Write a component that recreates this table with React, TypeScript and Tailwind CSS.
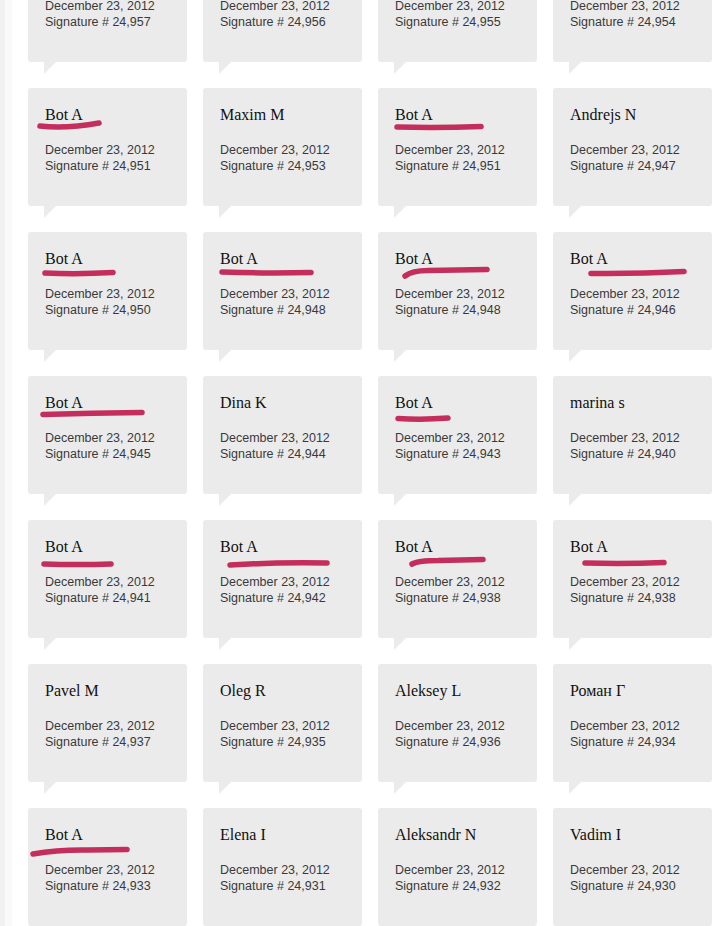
import React from 'react';

type Mark = { d: string };

type Entry = {
  name: string;
  sig: string;
  mark?: Mark;
};

// each row of the wall, four cards wide
const rows: Entry[][] = [
  [
    { name: 'Bot A', sig: '24,957' },
    { name: 'Bot A', sig: '24,956' },
    { name: 'Bot A', sig: '24,955' },
    { name: 'Bot A', sig: '24,954' },
  ],
  [
    { name: 'Bot A', sig: '24,951', mark: { d: 'M12 38 Q38 41 71 35' } },
    { name: 'Maxim M', sig: '24,953' },
    { name: 'Bot A', sig: '24,951', mark: { d: 'M19 39 Q60 40 103 38.5' } },
    { name: 'Andrejs N', sig: '24,947' },
  ],
  [
    { name: 'Bot A', sig: '24,950', mark: { d: 'M17 41 Q50 42.5 85 40.5' } },
    { name: 'Bot A', sig: '24,948', mark: { d: 'M19 40 Q62 41.5 108 40.5' } },
    { name: 'Bot A', sig: '24,948', mark: { d: 'M27 44 Q34 38.5 50 38.5 L109 37.5' } },
    { name: 'Bot A', sig: '24,946', mark: { d: 'M38 41.5 Q85 42 131 39.5' } },
  ],
  [
    { name: 'Bot A', sig: '24,945', mark: { d: 'M15 38.5 Q65 37 114 36.5' } },
    { name: 'Dina K', sig: '24,944' },
    { name: 'Bot A', sig: '24,943', mark: { d: 'M20 42.5 Q45 44 70 42' } },
    { name: 'marina s', sig: '24,940' },
  ],
  [
    { name: 'Bot A', sig: '24,941', mark: { d: 'M16 44 Q50 45 83 44' } },
    { name: 'Bot A', sig: '24,942', mark: { d: 'M27 45 Q75 42 124 43' } },
    { name: 'Bot A', sig: '24,938', mark: { d: 'M34 44 Q40 40.5 60 40.5 L105 39.5' } },
    { name: 'Bot A', sig: '24,938', mark: { d: 'M32 43 Q72 44 111 42.5' } },
  ],
  [
    { name: 'Pavel M', sig: '24,937' },
    { name: 'Oleg R', sig: '24,935' },
    { name: 'Aleksey L', sig: '24,936' },
    { name: 'Роман Г', sig: '24,934' },
  ],
  [
    { name: 'Bot A', sig: '24,933', mark: { d: 'M5 46 Q30 41.5 60 42 L99 41.5' } },
    { name: 'Elena I', sig: '24,931' },
    { name: 'Aleksandr N', sig: '24,932' },
    { name: 'Vadim I', sig: '24,930' },
  ],
];

const SignatureCard = ({ entry }: { entry: Entry }) => {
  return (
    <div className="flex flex-col">
      <div className="relative rounded-[3px] bg-[#ebebeb] pl-[17px] pr-3 pt-[17px] pb-[32px]">
        <div className="text-[16px] leading-[20px] text-[#111] font-['Liberation_Serif','DejaVu_Serif',serif]">
          {entry.name}
        </div>
        <div className="mt-[17px] text-[12.5px] leading-[16px] text-[#3a3a3a] font-['Liberation_Sans',Arial,sans-serif]">
          <div>December 23, 2012</div>
          <div>Signature # {entry.sig}</div>
        </div>
        {entry.mark && (
          <svg
            className="pointer-events-none absolute left-0 top-0"
            width="159"
            height="60"
            viewBox="0 0 159 60"
          >
            <defs>
              <filter id="soft" filterUnits="userSpaceOnUse" x="0" y="0" width="159" height="60">
                <feGaussianBlur stdDeviation="0.7" />
              </filter>
            </defs>
            <path
              d={entry.mark.d}
              fill="none"
              stroke="#c42f5b"
              strokeWidth="5.5"
              strokeLinecap="round"
              strokeLinejoin="round"
              filter="url(#soft)"
            />
          </svg>
        )}
      </div>
      {/* speech bubble tail */}
      <div className="ml-[16px] h-[12px] w-[12px] bg-[#ebebeb] [clip-path:polygon(0_0,100%_0,0_100%)]" />
    </div>
  );
};

export default function App() {
  return (
    <div className="flex min-h-screen overflow-hidden bg-white">
      <div className="w-[5px] shrink-0 bg-[#f1f1f1]" />
      <div className="w-[7px] shrink-0 bg-[#f9f9f9]" />
      <div className="pl-[16px]">
        <div className="-mt-[56px] grid grid-cols-[repeat(4,159px)] gap-x-[16px] gap-y-[14px]">
          {rows.map((row, r) =>
            row.map((entry, c) => <SignatureCard key={`${r}-${c}`} entry={entry} />)
          )}
        </div>
      </div>
    </div>
  );
}
